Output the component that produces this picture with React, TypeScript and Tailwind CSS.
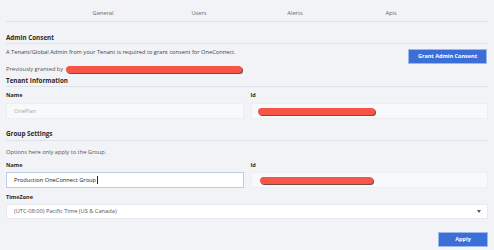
import React from "react";

const tabs = ["General", "Users", "Alerts", "Apis"];

function Redacted({ width }: { width: number }) {
    return (
        <span
            className="inline-block h-[7px] rounded-full bg-[#f65548] shadow-[1px_1px_0_#7a4a44]"
            style={{ width }}
        />
    );
}

function SectionHeader({ title, className }: { title: string; className: string }) {
    return (
        <div className={"flex items-center border-b border-[#dfe2e8] text-[6.3px] font-bold text-[#2a2a2a] " + className}>
            {title}
        </div>
    );
}

function Label({ text, className }: { text: string; className: string }) {
    return <div className={"text-[5.5px] font-bold leading-[7px] text-[#2a2a2a] " + className}>{text}</div>;
}

export default function App() {
    return (
        <div
            className="w-[494px] h-[250px] overflow-hidden bg-[#f2f3f7] px-[6px] text-[#444]"
            style={{ fontFamily: '"Open Sans", "Noto Sans", sans-serif' }}
        >
            <div className="flex h-[22px] items-end justify-center border-b border-[#dfe2e8] pb-[4px]">
                {tabs.map((tab) => (
                    <div key={tab} className="w-[96px] text-center text-[5.7px] leading-[8px] text-[#666]">
                        {tab}
                    </div>
                ))}
            </div>

            <SectionHeader title="Admin Consent" className="mt-[11px] h-[11px]" />
            <div className="mt-[5px] flex items-start justify-between">
                <div className="text-[5.7px] text-[#444]">
                    <p className="leading-[7px]">
                        A Tenant/Global Admin from your Tenant is required to grant consent for OneConnect.
                    </p>
                    <p className="mt-[9px] flex h-[8px] items-center gap-[3px] leading-[8px] text-[#555]">
                        Previously granted by
                        <Redacted width={176} />
                    </p>
                </div>
                <button className="mr-px h-[15px] w-[79px] border border-[#9db8ea] bg-[#3b6fd7] text-[5.5px] font-bold text-white">
                    Grant Admin Consent
                </button>
            </div>

            <SectionHeader title="Tenant Information" className="mt-[2px] h-[12px]" />
            <div className="grid grid-cols-2 gap-x-[7px]">
                <div>
                    <Label text="Name" className="mt-[5px]" />
                    <div className="mt-[4px] flex h-[16px] items-center border border-[#eceef2] bg-[#f8f9fb] px-[7px] text-[5.5px] text-[#aaa]">
                        OnePlan
                    </div>
                </div>
                <div>
                    <Label text="Id" className="mt-[5px]" />
                    <div className="mt-[4px] flex h-[16px] items-center border border-[#eceef2] bg-[#f8f9fb] px-[6px]">
                        <Redacted width={117} />
                    </div>
                </div>
            </div>

            <SectionHeader title="Group Settings" className="mt-[9px] h-[13px]" />
            <p className="mt-[8px] text-[5.7px] leading-[7px] text-[#555]">Options here only apply to the Group.</p>
            <div className="grid grid-cols-2 gap-x-[7px]">
                <div>
                    <Label text="Name" className="mt-[6px]" />
                    <div className="mt-[3px] flex h-[16px] items-center border border-[#bccde8] bg-white px-[7px] text-[5.7px] text-[#222]">
                        Production OneConnect Group
                        <span className="ml-px inline-block h-[8px] w-px bg-[#222]" />
                    </div>
                </div>
                <div>
                    <Label text="Id" className="mt-[6px]" />
                    <div className="mt-[3px] flex h-[16px] items-center border border-[#eceef2] bg-[#f8f9fb] px-[8px]">
                        <Redacted width={113} />
                    </div>
                </div>
            </div>

            <Label text="TimeZone" className="mt-[6px]" />
            <div className="mt-[3px] flex h-[15px] items-center justify-between border border-[#e8eaee] bg-white px-[7px] text-[5.7px] text-[#555]">
                <span>(UTC-08:00) Pacific Time (US &amp; Canada)</span>
                <svg width="4" height="3" viewBox="0 0 4 3" className="mr-[-1px]">
                    <path d="M0 0 L4 0 L2 3 Z" fill="#555" />
                </svg>
            </div>

            <div className="mt-[13px] flex justify-end">
                <button className="h-[15px] w-[50px] border border-[#9db8ea] bg-[#3b6fd7] text-[5.5px] font-bold text-white">
                    Apply
                </button>
            </div>
        </div>
    );
}
